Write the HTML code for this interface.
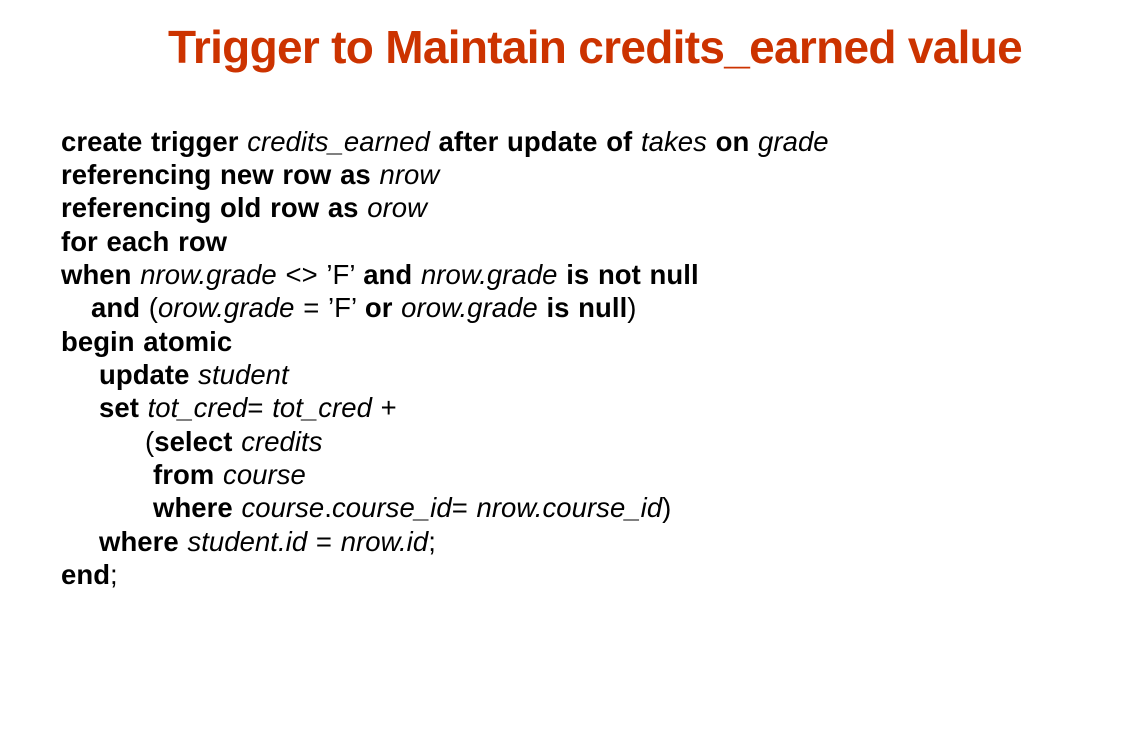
<!DOCTYPE html>
<html><head><style>
body{margin:0;width:1121px;height:750px;background:#fff;position:relative;font-family:"Liberation Sans",Arial,sans-serif;overflow:hidden}
h1{position:absolute;left:0;width:1190px;text-align:center;top:20px;margin:0;font-size:46px;color:#CC3300;font-weight:bold;letter-spacing:-0.7px}
.l{position:absolute;font-size:27.5px;color:#000;white-space:pre;line-height:30px;letter-spacing:0.05px;word-spacing:1px}
b{font-weight:bold}
i{font-style:italic}
</style></head><body>
<h1>Trigger to Maintain credits_earned value</h1>
<div class="l" style="left:61px;top:127px"><b>create trigger</b> <i>credits_earned</i> <b>after update of</b> <i>takes</i> <b>on</b> <i>grade</i></div>
<div class="l" style="left:61px;top:160px"><b>referencing new row as</b> <i>nrow</i></div>
<div class="l" style="left:61px;top:193px"><b>referencing old row as</b> <i>orow</i></div>
<div class="l" style="left:61px;top:227px"><b>for each row</b></div>
<div class="l" style="left:61px;top:260px"><b>when</b> <i>nrow.grade</i> &lt;&gt; ’F’ <b>and</b> <i>nrow.grade</i> <b>is not null</b></div>
<div class="l" style="left:91px;top:293px"><b>and</b> (<i>orow.grade</i> = ’F’ <b>or</b> <i>orow.grade</i> <b>is null</b>)</div>
<div class="l" style="left:61px;top:327px"><b>begin atomic</b></div>
<div class="l" style="left:99px;top:360px"><b>update</b> <i>student</i></div>
<div class="l" style="left:99px;top:393px"><b>set</b> <i>tot_cred</i>= <i>tot_cred</i> +</div>
<div class="l" style="left:145px;top:427px">(<b>select</b> <i>credits</i></div>
<div class="l" style="left:153px;top:460px"><b>from</b> <i>course</i></div>
<div class="l" style="left:153px;top:493px"><b>where</b> <i>course</i>.<i>course_id</i>= <i>nrow.course_id</i>)</div>
<div class="l" style="left:99px;top:527px"><b>where</b> <i>student.id</i> = <i>nrow.id</i>;</div>
<div class="l" style="left:61px;top:560px"><b>end</b>;</div>
</body></html>
